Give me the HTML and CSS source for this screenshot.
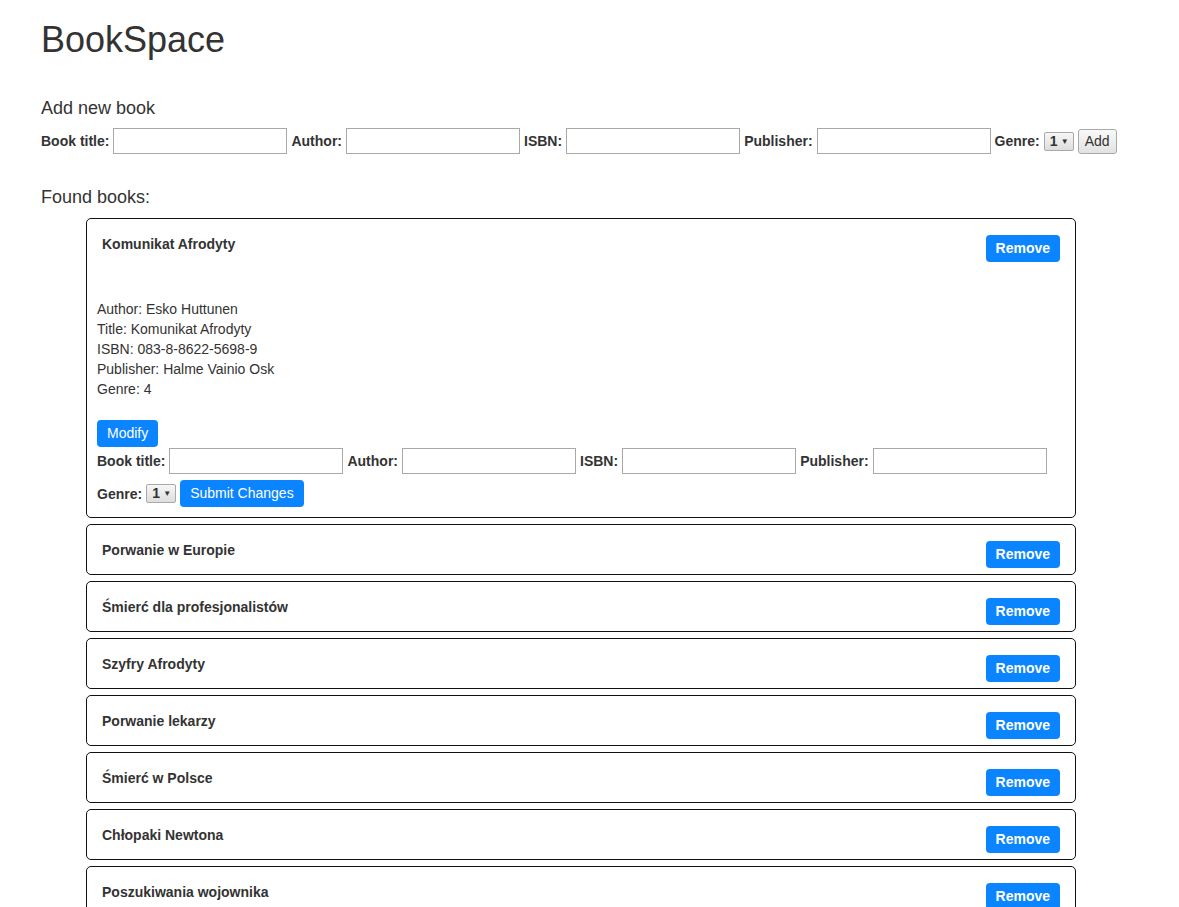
FILE: index.html
```html
<!DOCTYPE html>
<html lang="pl">
<head>
<meta charset="utf-8">
<title>BookSpace</title>
<link rel="stylesheet" href="styles.css">
</head>
<body>
<h1 class="app-title">BookSpace</h1>

<h4 class="section-title add-title">Add new book</h4>
<form class="book-form">
  <label class="lbl">Book title:</label><input class="field" type="text">
  <label class="lbl">Author:</label><input class="field" type="text">
  <label class="lbl">ISBN:</label><input class="field" type="text">
  <label class="lbl">Publisher:</label><input class="field" type="text">
  <label class="lbl">Genre:</label><span class="select-wrap"><select class="genre"><option>1</option><option>2</option><option>3</option><option>4</option></select></span>
  <button class="btn-plain" type="button">Add</button>
</form>

<h4 class="section-title found-title">Found books:</h4>

<div class="book-list">
  <div class="book-card">
    <div class="card-head">
      <span class="book-name">Komunikat Afrodyty</span>
      <button class="btn-blue btn-bold" type="button">Remove</button>
    </div>
    <div class="card-body">
      <div class="details">
        <div>Author: Esko Huttunen</div>
        <div>Title: Komunikat Afrodyty</div>
        <div>ISBN: 083-8-8622-5698-9</div>
        <div>Publisher: Halme Vainio Osk</div>
        <div>Genre: 4</div>
      </div>
      <button class="btn-blue modify-btn" type="button">Modify</button>
      <form class="book-form edit-form">
        <label class="lbl">Book title:</label><input class="field" type="text">
        <label class="lbl">Author:</label><input class="field" type="text">
        <label class="lbl">ISBN:</label><input class="field" type="text">
        <label class="lbl">Publisher:</label><input class="field" type="text">
        <label class="lbl">Genre:</label><span class="select-wrap"><select class="genre"><option>1</option><option>2</option><option>3</option><option>4</option></select></span>
        <button class="btn-blue" type="button">Submit Changes</button>
      </form>
    </div>
  </div>

  <div class="book-card">
    <div class="card-head">
      <span class="book-name">Porwanie w Europie</span>
      <button class="btn-blue btn-bold" type="button">Remove</button>
    </div>
  </div>
  <div class="book-card">
    <div class="card-head">
      <span class="book-name">Śmierć dla profesjonalistów</span>
      <button class="btn-blue btn-bold" type="button">Remove</button>
    </div>
  </div>
  <div class="book-card">
    <div class="card-head">
      <span class="book-name">Szyfry Afrodyty</span>
      <button class="btn-blue btn-bold" type="button">Remove</button>
    </div>
  </div>
  <div class="book-card">
    <div class="card-head">
      <span class="book-name">Porwanie lekarzy</span>
      <button class="btn-blue btn-bold" type="button">Remove</button>
    </div>
  </div>
  <div class="book-card">
    <div class="card-head">
      <span class="book-name">Śmierć w Polsce</span>
      <button class="btn-blue btn-bold" type="button">Remove</button>
    </div>
  </div>
  <div class="book-card">
    <div class="card-head">
      <span class="book-name">Chłopaki Newtona</span>
      <button class="btn-blue btn-bold" type="button">Remove</button>
    </div>
  </div>
  <div class="book-card">
    <div class="card-head">
      <span class="book-name">Poszukiwania wojownika</span>
      <button class="btn-blue btn-bold" type="button">Remove</button>
    </div>
  </div>
</div>
</body>
</html>
```

FILE: styles.css
```css
* { box-sizing: border-box; }

body {
  margin: 0;
  padding: 0 41px 40px;
  font-family: "Liberation Sans", Arial, sans-serif;
  font-size: 14px;
  line-height: 20px;
  color: #333;
  background: #fff;
}

.app-title {
  margin: 20px 0 0;
  font-size: 36px;
  line-height: 40px;
  font-weight: 500;
}

.section-title {
  margin: 0;
  font-size: 18px;
  line-height: 20px;
  font-weight: 500;
}

.add-title { margin-top: 38px; }
.found-title { margin-top: 33px; }

.book-form {
  display: flex;
  flex-wrap: wrap;
  align-items: center;
  column-gap: 4px;
  row-gap: 6px;
  margin: 10px 0 0;
}

.lbl {
  font-weight: 700;
  line-height: 20px;
}

.field {
  width: 174px;
  height: 26px;
  border: 1px solid #a9a9a9;
  border-radius: 0;
  padding: 2px 4px;
  font: inherit;
  background: #fff;
}

.select-wrap {
  position: relative;
  display: inline-flex;
}

.select-wrap::after {
  content: "▼";
  position: absolute;
  right: 5px;
  top: 6px;
  font-size: 8px;
  line-height: 8px;
  color: #333;
  pointer-events: none;
}

.genre {
  -webkit-appearance: none;
  appearance: none;
  width: 30px;
  height: 19px;
  padding: 0 0 0 5px;
  border: 1px solid #a9a9a9;
  border-radius: 2px;
  background: linear-gradient(#f7f7f7, #dddddd);
  font-family: "Liberation Sans", Arial, sans-serif;
  font-size: 14px;
  font-weight: 700;
  line-height: 17px;
  color: #333;
}

.btn-plain {
  height: 25px;
  padding: 0 6px;
  border: 1px solid #a9a9a9;
  border-radius: 3px;
  background: linear-gradient(#f9f9f9, #e2e2e2);
  font-family: inherit;
  font-size: 14px;
  color: #333;
}

.book-list {
  margin: 11px 0 0 45px;
  width: 990px;
  display: flex;
  flex-direction: column;
  gap: 6px;
}

.book-card {
  border: 1px solid #111;
  border-radius: 5px;
  background: #fff;
}

.card-head {
  display: flex;
  justify-content: space-between;
  align-items: flex-start;
  padding: 15px 15px 6px;
}

.book-name {
  font-weight: 700;
  line-height: 20px;
}

.btn-blue {
  height: 27px;
  padding: 0 10px;
  border: 0;
  border-radius: 4px;
  background: #0a84ff;
  color: #fff;
  font-family: inherit;
  font-size: 14px;
  line-height: 27px;
}

.btn-bold {
  font-weight: 700;
  margin-top: 1px;
}

.card-body {
  padding: 0 10px 10px;
  display: flex;
  flex-direction: column;
  align-items: flex-start;
}

.details {
  margin-top: 31px;
  line-height: 20px;
}

.modify-btn { margin-top: 21px; }

.edit-form {
  margin-top: 1px;
  width: 100%;
}
```
